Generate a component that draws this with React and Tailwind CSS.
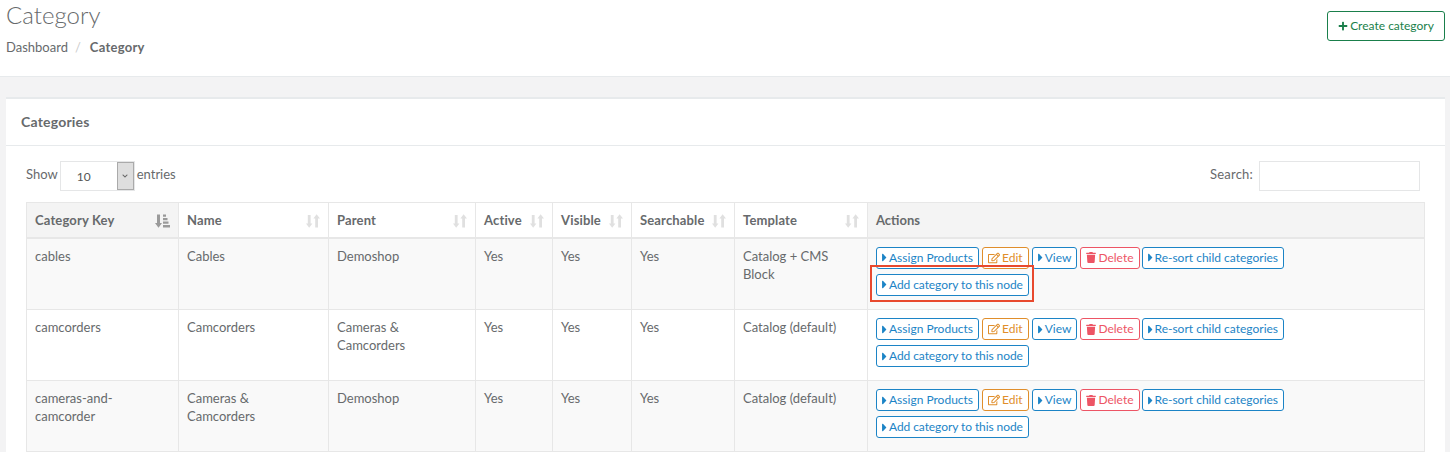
import React from 'react';
import { FaCaretRight, FaPlus, FaRegEdit, FaTrash, FaChevronDown } from 'react-icons/fa';

const columns = [
  { label: 'Category Key', width: 'w-[152px]', sorted: true },
  { label: 'Name', width: 'w-[150px]' },
  { label: 'Parent', width: 'w-[147px]' },
  { label: 'Active', width: 'w-[77px]' },
  { label: 'Visible', width: 'w-[79px]' },
  { label: 'Searchable', width: 'w-[103px]' },
  { label: 'Template', width: 'w-[133px]' },
];

const rows = [
  { key: 'cables', name: 'Cables', parent: 'Demoshop', template: 'Catalog + CMS Block', marked: true },
  { key: 'camcorders', name: 'Camcorders', parent: 'Cameras & Camcorders', template: 'Catalog (default)' },
  { key: 'cameras-and-camcorder', name: 'Cameras & Camcorders', parent: 'Demoshop', template: 'Catalog (default)' },
];

const SortIcon = () => (
  <svg width="14" height="14" viewBox="0 0 14 14" className="text-[#e0e0e0]" fill="currentColor">
    <path d="M1.8 1h2.8v8.5h1.8L3.2 13.8 0 9.5h1.8z" />
    <path d="M9.2 13.5H12V4.6h2L10.6.3 7.4 4.6h1.8z" />
  </svg>
);

const SortedIcon = () => (
  <svg width="15" height="14" viewBox="0 0 15 14" className="text-[#9a9a9a]" fill="currentColor">
    <path d="M2 .5h3V9h2L3.5 13.8 0 9h2z" />
    <path d="M8 .5h3v2.2H8zM8 4h4.5v2.2H8zM8 7.5h5.5v2.2H8zM8 11h7v2.4H8z" />
  </svg>
);

const ActionButton = ({ children, color = 'blue' }) => {
  const colors = {
    blue: 'border-[#1c84c6] text-[#1c84c6]',
    orange: 'border-[#e08e2b] text-[#e08e2b]',
    red: 'border-[#ed5565] text-[#ed5565]',
  };
  return (
    <button className={`h-[22px] px-[5px] border rounded-[3px] bg-white text-[12px] leading-none whitespace-nowrap inline-flex items-center ${colors[color]}`}>
      {children}
    </button>
  );
};

const Caret = () => <FaCaretRight className="w-[7px] h-[13px] -ml-[1px] mr-[1px] shrink-0" />;

const Actions = ({ marked }) => (
  <div className="flex flex-wrap gap-x-[3px] gap-y-[4px] w-[540px]">
    <ActionButton><Caret />Assign Products</ActionButton>
    <ActionButton color="orange"><FaRegEdit className="w-[12px] h-[12px] mr-[2px]" />Edit</ActionButton>
    <ActionButton><Caret />View</ActionButton>
    <ActionButton color="red"><FaTrash className="w-[10px] h-[11px] mr-[2px]" />Delete</ActionButton>
    <div className="-ml-[1px]">
      <ActionButton><Caret />Re-sort child categories</ActionButton>
    </div>
    <div className="relative basis-full flex">
      <ActionButton><Caret /><span className="tracking-[-0.08px]">Add category to this node</span></ActionButton>
      {marked && (
        <div className="absolute left-[-6px] top-[-9px] w-[164px] h-[37px] border-2 border-[#e8492e]" />
      )}
    </div>
  </div>
);

const App = () => {
  return (
    <div className="h-[452px] overflow-hidden bg-[#f3f3f4] text-[13px] text-[#676a6c] font-['Lato','Open_Sans',sans-serif]">
      <div className="h-[77px] bg-white border-b border-[#e7eaec] flex justify-between pl-[6px] pr-[5px]">
        <div>
          <h2 className="text-[24px] leading-[30px] font-light">Category</h2>
          <div className="flex mt-[9px] leading-[16px]">
            <span>Dashboard</span>
            <span className="text-[#ccc] mx-[7px]">/</span>
            <strong className="font-bold ml-[2px] tracking-[0.25px]">Category</strong>
          </div>
        </div>
        <button className="mt-[11px] h-[30px] w-[118px] border border-[#1a7f4b] rounded-[3px] bg-white text-[#1a7f4b] text-[12px] inline-flex items-center justify-center">
          <FaPlus className="w-[10px] h-[10px] mr-[2px]" />Create category
        </button>
      </div>

      <div className="mt-[20px] ml-[6px] mr-[5px] bg-white border-t-2 border-[#e7eaec]">
        <div className="h-[47px] border-b border-[#e7eaec] pl-[15px] pb-[2px] flex items-center font-bold text-[14px] tracking-[0.2px]">
          Categories
        </div>
        <div className="pt-[15px] px-[20px]">
          <div className="flex justify-between h-[30px] mb-[11px] items-center">
            <div className="flex items-center">
              <span className="mb-[2px]">Show</span>
              <div className="ml-[2px] mr-[2px] w-[75px] h-[30px] border border-[#e5e6e7] flex items-center justify-between bg-white">
                <span className="ml-[16px] mt-[2px] text-[12px] text-[#555]">10</span>
                <span className="w-[17px] h-full bg-[#dedede] border border-[#aaa] flex items-center justify-center">
                  <FaChevronDown className="w-[6px] h-[6px] text-[#666]" />
                </span>
              </div>
              <span className="mb-[2px]">entries</span>
            </div>
            <div className="flex items-center mr-[5px]">
              <span className="mr-[6px] mb-[2px] tracking-[0.2px]">Search:</span>
              <input className="w-[161px] h-[30px] border border-[#e5e6e7] outline-none" />
            </div>
          </div>

          <table className="table-fixed border-collapse w-[1399px]">
            <thead>
              <tr className="h-[35px]">
                {columns.map((col) => (
                  <th key={col.label} className={`${col.width} border border-b-2 border-[#e7e7e7] px-[8px] pt-[2px] text-left font-bold ${col.sorted ? 'bg-[#f4f4f4]' : 'bg-white'}`}>
                    <div className="flex items-center justify-between">
                      <span className="tracking-[0.15px]">{col.label}</span>
                      {col.sorted ? <SortedIcon /> : <SortIcon />}
                    </div>
                  </th>
                ))}
                <th className="border border-b-2 border-[#e7e7e7] px-[8px] pt-[2px] text-left font-bold bg-[#f4f4f4]">Actions</th>
              </tr>
            </thead>
            <tbody>
              {rows.map((row, i) => (
                <tr key={row.key} className={`${i === 0 ? 'h-[72px]' : 'h-[71px]'} ${i % 2 === 0 ? 'bg-[#f9f9f9]' : 'bg-white'}`}>
                  {[row.key, row.name, row.parent, 'Yes', 'Yes', 'Yes', row.template].map((val, j) => (
                    <td key={j} className="border border-[#e7e7e7] px-[8px] pt-[8px] align-top leading-[18px]">{val}</td>
                  ))}
                  <td className="border border-[#e7e7e7] px-[8px] pt-[8px] align-top">
                    <Actions marked={row.marked} />
                  </td>
                </tr>
              ))}
            </tbody>
          </table>
        </div>
      </div>
    </div>
  );
};

export default App;
